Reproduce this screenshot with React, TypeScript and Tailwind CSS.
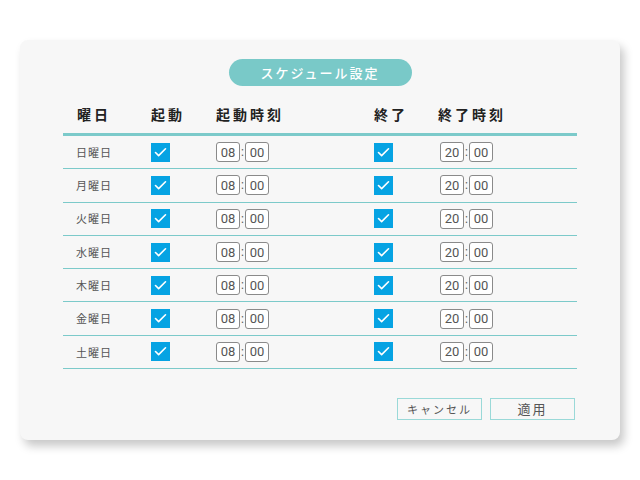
import { Check } from 'lucide-react';

const days = ['日曜日', '月曜日', '火曜日', '水曜日', '木曜日', '金曜日', '土曜日'];

const cols = 'grid grid-cols-[88px_65px_158px_66px_1fr] items-center';
const jp = "font-['Noto_Sans_CJK_JP','Noto_Sans',sans-serif]";

function Box({ checked }: { checked: boolean }) {
  return (
    <div className="flex h-[19px] w-[19px] items-center justify-center bg-[#06a3e3]">
      {checked && <Check className="h-[15px] w-[15px] text-white" strokeWidth={2.6} />}
    </div>
  );
}

function TimeField({ h, m }: { h: string; m: string }) {
  return (
    <div className="flex items-center font-['Roboto',sans-serif] text-[13px] text-[#555]">
      <span className="flex h-[20px] w-[24px] items-center justify-center rounded-[3px] border border-[#8a8a8a] bg-white leading-none">
        {h}
      </span>
      <span className="w-[5px] text-center text-[12px] leading-none">:</span>
      <span className="flex h-[20px] w-[24px] items-center justify-center rounded-[3px] border border-[#8a8a8a] bg-white leading-none">
        {m}
      </span>
    </div>
  );
}

export default function App() {
  return (
    <div className={`h-[480px] w-[640px] bg-white pt-[40px] pl-[20px] ${jp}`}>
      <div className="flex h-[400px] w-[600px] flex-col rounded-[8px] bg-[#f7f7f7] pt-[19px] shadow-[4px_6px_10px_rgba(0,0,0,0.22)]">
        <div className="flex justify-center">
          <div className="flex h-[27px] w-[183px] items-center justify-center rounded-full bg-[#79c9c8] text-[13px] font-medium tracking-[2px] text-white">
            スケジュール設定
          </div>
        </div>

        <div className="mx-[43px] mt-[12px]">
          <div className={`${cols} h-[38px] border-b-[3px] border-[#7ccaca] pb-[2px] text-[14px] font-bold tracking-[3px] text-[#222]`}>
            <span className="pl-[14px]">曜日</span>
            <span>起動</span>
            <span>起動時刻</span>
            <span>終了</span>
            <span className="-ml-[2px]">終了時刻</span>
          </div>
          {days.map((d) => (
            <div key={d} className={`${cols} h-[33.3px] border-b border-[#7ccaca]`}>
              <span className="pl-[13px] text-[11px] tracking-[1px] text-[#555]">{d}</span>
              <Box checked />
              <TimeField h="08" m="00" />
              <Box checked />
              <TimeField h="20" m="00" />
            </div>
          ))}
        </div>

        <div className="mt-[29px] mr-[45px] flex justify-end gap-[8px]">
          <button className="h-[22px] w-[85px] border border-[#9ad9d8] text-[11px] tracking-[2px] text-[#555]">
            キャンセル
          </button>
          <button className="h-[22px] w-[85px] border border-[#9ad9d8] text-[13px] tracking-[2px] text-[#555]">
            適用
          </button>
        </div>
      </div>
    </div>
  );
}
